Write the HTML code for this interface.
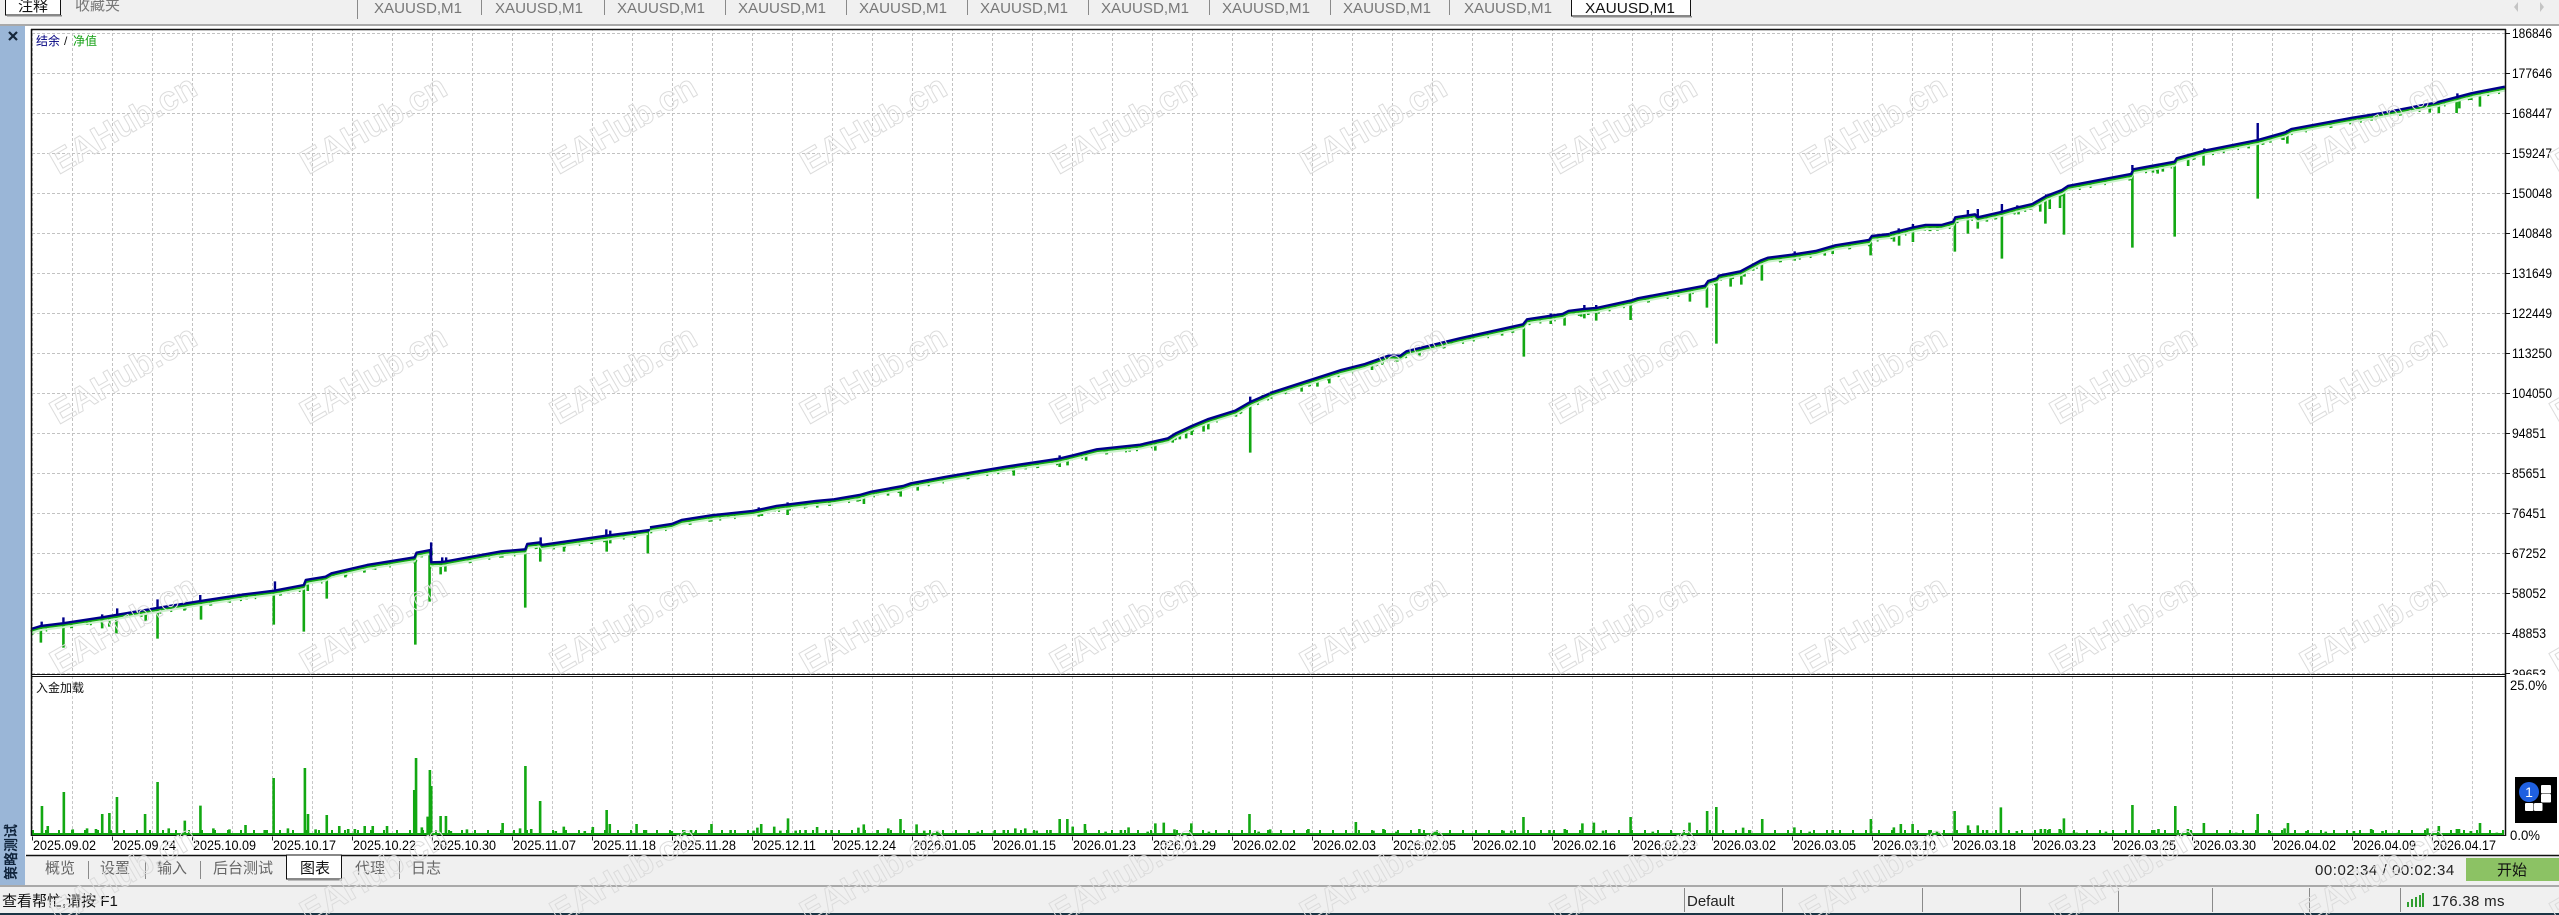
<!DOCTYPE html>
<html lang="zh-CN">
<head>
<meta charset="utf-8">
<title>XAUUSD,M1</title>
<style>
html,body{margin:0;padding:0;background:#fff;width:2559px;height:915px;overflow:hidden}
svg{display:block;position:absolute;left:0;top:0}
text{font-family:"Liberation Sans","Noto Sans CJK SC",sans-serif}
.tab{font-size:15px;fill:#777}
.y{font-size:14px;fill:#000}
.d{font-size:14px;fill:#000}
.b{font-size:15px;fill:#666}
.w{font-size:34px;font-weight:bold;fill:none;stroke:#dcdcdc;stroke-width:1;text-anchor:middle}
.sp{fill:none;stroke:#12a812;stroke-width:2.6}
.bl{fill:none;stroke:#00008b;stroke-width:2.4}
.cu{fill:none;stroke-linejoin:round}
.nz{fill:none;stroke:#12a812;stroke-width:5;stroke-dasharray:2 13 1.5 23 3 17 2 9}
path{vector-effect:non-scaling-stroke}
</style>
</head>
<body>
<svg width="2559" height="915" viewBox="0 0 2559 915" xmlns="http://www.w3.org/2000/svg">
<defs>
<pattern id="g1" x="72" y="33" width="40" height="40" patternUnits="userSpaceOnUse">
<path d="M.5 0V40M0 .5H40" stroke="#c2c2c2" stroke-width="1" stroke-dasharray="3 2" fill="none"/>
</pattern>
<pattern id="g2" x="72" y="676" width="40" height="40" patternUnits="userSpaceOnUse">
<path d="M.5 0V40" stroke="#c8c8c8" stroke-width="1" stroke-dasharray="3 2" fill="none"/>
</pattern>
</defs>

<rect width="2559" height="915" fill="#fff"/>
<!-- top bar -->
<rect x="0" y="0" width="2559" height="24" fill="#f0f0f0"/>
<rect x="0" y="24" width="2559" height="2" fill="#a9a9a9"/>
<rect x="5.5" y="-2" width="55" height="17" fill="#fff" stroke="#111"/>
<rect x="7" y="15" width="55" height="1.5" fill="#888"/>
<text x="18" y="11" font-size="15" fill="#111">注释</text>
<text x="75" y="10" font-size="15" fill="#777">收藏夹</text>
<path d="M357.5 0V19M481.5 0V15M604.5 0V15M725.5 0V15M846.5 0V15M967.5 0V15M1088.5 0V15M1209.5 0V15M1330.5 0V15M1449.5 0V15" stroke="#8a8a8a" fill="none"/>
<text class="tab" x="374" y="13" textLength="88" lengthAdjust="spacingAndGlyphs">XAUUSD,M1</text>
<text class="tab" x="495" y="13" textLength="88" lengthAdjust="spacingAndGlyphs">XAUUSD,M1</text>
<text class="tab" x="617" y="13" textLength="88" lengthAdjust="spacingAndGlyphs">XAUUSD,M1</text>
<text class="tab" x="738" y="13" textLength="88" lengthAdjust="spacingAndGlyphs">XAUUSD,M1</text>
<text class="tab" x="859" y="13" textLength="88" lengthAdjust="spacingAndGlyphs">XAUUSD,M1</text>
<text class="tab" x="980" y="13" textLength="88" lengthAdjust="spacingAndGlyphs">XAUUSD,M1</text>
<text class="tab" x="1101" y="13" textLength="88" lengthAdjust="spacingAndGlyphs">XAUUSD,M1</text>
<text class="tab" x="1222" y="13" textLength="88" lengthAdjust="spacingAndGlyphs">XAUUSD,M1</text>
<text class="tab" x="1343" y="13" textLength="88" lengthAdjust="spacingAndGlyphs">XAUUSD,M1</text>
<text class="tab" x="1464" y="13" textLength="88" lengthAdjust="spacingAndGlyphs">XAUUSD,M1</text>
<rect x="1571.5" y="-2" width="119" height="18" fill="#fff" stroke="#111"/>
<rect x="1573" y="16" width="119" height="1.5" fill="#888"/>
<text x="1585" y="13" font-size="15" fill="#111" textLength="90" lengthAdjust="spacingAndGlyphs">XAUUSD,M1</text>
<path d="M2518 2L2514 7L2518 12Z" fill="#c4c4c4"/>
<path d="M2540 2L2544 7L2540 12Z" fill="#c4c4c4"/>

<!-- left panel -->
<rect x="0" y="26" width="25" height="859" fill="#9ab6d7"/>
<path d="M9 32L17 40M17 32L9 40" stroke="#15263a" stroke-width="2.2" fill="none"/>
<text transform="translate(16,880) rotate(-90)" font-size="14" font-weight="bold" fill="#10243c">策略测试</text>

<!-- charts -->
<rect x="32" y="30" width="2473" height="644" fill="url(#g1)"/>
<rect x="32" y="677" width="2473" height="158" fill="url(#g2)"/>

<text x="36" y="45" font-size="12" fill="#000080">结余</text>
<text x="64" y="45" font-size="12" fill="#111">/</text>
<text x="73" y="45" font-size="12" fill="#12a012">净值</text>
<text x="36" y="692" font-size="12" fill="#111">入金加载</text>

<!-- section 1 -->
<g transform="translate(31,520) scale(.3954,.3333)">
<path class="sp" d="M25 318V368M82 310V383M142 305V315M180 295V325M198 292V320M216 288V340M290 275V303M320 265V356M388 250V272M430 243V299M500 232V247M545 222V238M614 212V314M650 208V218M690 195V335M700 185V213M748 170V236M765 160V172M795 155V172M843 138V158M865 133V148M900 128V138M972 110V374M988 100V112M1008 95V245M1036 125V163M1048 122V155M1105 112V122M1192 94V113M1250 88V263M1288 75V125M1348 70V95M1418 58V72M1456 50V95M1465 45V70M1530 35V50M1560 30V100"/>
<path class="nz" d="M0 338L25 329L80 321L180 303L215 296L320 275L430 254L540 234L615 223L690 206L695 191L745 181L760 171L850 146L970 123L975 109L1010 101L1012 138L1040 137L1190 105L1250 99L1255 83L1288 78L1292 86L1450 59L1560 41"/>
<path class="cu" stroke="#c9f2c9" stroke-width="2" d="M0 339L25 330L80 322L180 304L215 297L320 276L430 255L540 235L615 224L690 207L695 192L745 182L760 172L850 147L970 124L975 110L1010 102L1012 139L1040 138L1190 106L1250 100L1255 84L1288 79L1292 87L1450 60L1560 42"/>
<path class="cu" stroke="#12a812" stroke-width="2.4" d="M0 332L25 323L80 315L180 297L215 290L320 269L430 248L540 228L615 217L690 200L695 185L745 175L760 165L850 140L970 117L975 103L1010 95L1012 132L1040 131L1190 99L1250 93L1255 77L1288 72L1292 80L1450 53L1560 35"/>
<path class="bl" d="M27 305V320M82 292V310M180 283V295M218 265V285M320 238V264M428 225V243M617 184V212M1012 67V127M1040 112V125M1050 112V122M1289 52V75M1455 28V48M1465 32V45"/>
<path class="cu bl" d="M0 327L25 318L80 310L180 292L215 285L320 264L430 243L540 223L615 212L690 195L695 180L745 170L760 160L850 135L970 112L975 98L1010 90L1012 127L1040 126L1190 94L1250 88L1255 72L1288 67L1292 75L1450 48L1566 30"/>
</g>

<!-- section 2 -->
<g transform="translate(650,340) scale(.3954,.3333)">
<path class="sp" d="M155 526V545M198 518V533M275 510V530M283 510V528M315 500V515M348 495V525M395 490V503M423 484V503M525 465V485M541 463V492M575 455V467M602 450V467M634 440V470M677 428V452M738 412V422M830 397V405M873 388V398M890 385V393M920 380V407M950 375V388M978 370V380M1018 360V372M1036 355V381M1056 352V376M1103 340V362M1150 330V338M1213 320V335M1278 303V332M1295 298V308M1322 285V308M1340 280V298M1356 270V295M1370 258V285M1400 245V275M1412 238V268M1482 210V230M1518 186V338M1535 175V192M1550 165V180"/>
<path class="nz" d="M0 573L55 563L80 551L155 537L260 524L320 509L420 494L465 489L530 476L560 466L640 449L660 441L750 421L900 391L1030 368L1070 357L1130 339L1240 325L1310 306L1330 291L1370 269L1410 249L1480 223L1518 197L1568 171"/>
<path class="cu" stroke="#c9f2c9" stroke-width="2" d="M0 574L55 564L80 552L155 538L260 525L320 510L420 495L465 490L530 477L560 467L640 450L660 442L750 422L900 392L1030 369L1070 358L1130 340L1240 326L1310 307L1330 292L1370 270L1410 250L1480 224L1518 198L1568 172"/>
<path class="cu" stroke="#12a812" stroke-width="2.4" d="M0 567L55 557L80 545L155 531L260 518L320 503L420 488L465 483L530 470L560 460L640 443L660 435L750 415L900 385L1030 362L1070 351L1130 333L1240 319L1310 300L1330 285L1370 263L1410 243L1480 217L1518 191L1568 165"/>
<path class="bl" d="M348 487V497M275 502V512M1036 346V356M1518 170V186"/>
<path class="cu bl" d="M0 562L55 552L80 540L155 526L260 513L320 498L420 483L465 478L530 465L560 455L640 438L660 430L750 410L900 380L1030 357L1070 346L1130 328L1240 314L1310 295L1330 280L1370 258L1410 238L1480 212L1518 186L1568 160"/>
</g>

<!-- section 3 -->
<g transform="translate(1270,210) scale(.3954,.3333)">
<path class="sp" d="M40 535V550M80 525V545M120 510V530M150 495V520M228 465V480M258 460V480M285 445V465M322 437V455M378 415V437M412 405V415M430 400V413M460 395V402M505 382V392M587 360V377M642 343V440M710 320V342M745 312V347M768 305V315M787 300V320M795 298V325M805 298V315M825 295V332M873 280V292M912 271V330M950 263V270M1062 235V275M1105 227V293M1129 205V401M1140 198V212M1165 193V230M1192 184V224M1200 178V200M1222 160V182M1244 150V212M1290 142V155M1327 135V152M1365 128V140M1403 120V137M1423 110V132M1519 90V136"/>
<path class="nz" d="M0 560L180 491L240 473L300 448L330 448L345 435L480 396L640 354L650 339L740 323L755 314L795 308L825 305L915 282L930 276L1100 238L1108 224L1130 216L1135 208L1190 195L1240 163L1260 154L1320 145L1380 134L1430 117L1515 101L1522 89L1568 83"/>
<path class="cu" stroke="#c9f2c9" stroke-width="2" d="M0 561L180 492L240 474L300 449L330 449L345 436L480 397L640 355L650 340L740 324L755 315L795 309L825 306L915 283L930 277L1100 239L1108 225L1130 217L1135 209L1190 196L1240 164L1260 155L1320 146L1380 135L1430 118L1515 102L1522 90L1568 84"/>
<path class="cu" stroke="#12a812" stroke-width="2.4" d="M0 554L180 485L240 467L300 442L330 442L345 429L480 390L640 348L650 333L740 317L755 308L795 302L825 299L915 276L930 270L1100 232L1108 218L1130 210L1135 202L1190 189L1240 157L1260 148L1320 139L1380 128L1430 111L1515 95L1522 83L1568 77"/>
<path class="bl" d="M710 310V322M795 285V298M825 285V295M1327 124V135"/>
<path class="cu bl" d="M0 549L180 480L240 462L300 437L330 437L345 424L480 385L640 343L650 328L740 312L755 303L795 297L825 294L915 271L930 265L1100 227L1108 213L1130 205L1135 197L1190 184L1240 152L1260 143L1320 134L1380 123L1430 106L1515 90L1522 78L1568 72"/>
</g>

<!-- section 4 -->
<g transform="translate(1890,80) scale(.3954,.3333)">
<path class="sp" d="M10 460V485M23 455V497M42 450V460M58 442V486M88 437V452M120 435V452M164 425V515M197 410V461M222 412V446M245 408V425M268 400V415M283 395V536M310 388V402M325 382V403M355 372V390M380 365V395M393 350V431M404 348V387M430 335V384M440 330V464M507 308V320M545 296V307M613 282V503M665 260V278M677 258V281M690 256V275M720 245V470M754 235V258M770 228V236M793 215V257M870 198V207M907 188V205M930 180V356M962 168V188M995 160V180M1005 150V191M1050 140V155M1100 130V135M1170 113V122M1218 102V122M1365 72V98M1388 68V99M1433 55V99M1440 55V85M1470 40V60M1492 35V80"/>
<path class="nz" d="M0 471L60 453L90 446L130 446L160 436L165 423L215 414L222 423L285 406L320 394L360 383L395 359L435 341L450 329L610 293L615 279L720 256L725 246L795 223L930 191L1000 168L1015 158L1170 124L1240 111L1380 79L1470 51L1490 46L1555 31"/>
<path class="cu" stroke="#c9f2c9" stroke-width="2" d="M0 472L60 454L90 447L130 447L160 437L165 424L215 415L222 424L285 407L320 395L360 384L395 360L435 342L450 330L610 294L615 280L720 257L725 247L795 224L930 192L1000 169L1015 159L1170 125L1240 112L1380 80L1470 52L1490 47L1555 32"/>
<path class="cu" stroke="#12a812" stroke-width="2.4" d="M0 465L60 447L90 440L130 440L160 430L165 417L215 408L222 417L285 400L320 388L360 377L395 353L435 335L450 323L610 287L615 273L720 250L725 240L795 217L930 185L1000 162L1015 152L1170 118L1240 105L1380 73L1470 45L1490 40L1555 25"/>
<path class="bl" d="M22 445V458M58 432V442M197 390V408M222 387V412M283 372V395M322 376V384M395 343V350M613 255V270M795 205V212M930 129V180M1435 40V55"/>
<path class="cu bl" d="M0 460L60 442L90 435L130 435L160 425L165 412L215 403L222 412L285 395L320 383L360 372L395 348L435 330L450 318L610 282L615 268L720 245L725 235L795 212L930 180L1000 157L1015 147L1170 113L1240 100L1380 68L1470 40L1490 35L1555 20"/>
</g>

<!-- lower chart bars -->
<path d="M32 832H2504" stroke="#12a812" stroke-width="4" stroke-dasharray="2 11" fill="none"/>
<path d="M32 834H2504" stroke="#12a812" stroke-width="2" fill="none"/>
<g transform="translate(0,640) scale(.4464,.3333)">
<path class="sp" d="M94 585V498M107 585V558M143 585V456M163 585V568M195 585V565M215 585V567M229 585V522M245 585V519M262 585V471M325 585V522M353 585V426M378 585V565M414 585V542M449 585V497M478 585V565M514 585V568M550 585V555M593 585V570M613 585V414M645 585V565M683 585V384M690 585V522M707 585V568M732 585V525M760 585V558M780 585V567M795 585V567M817 585V558M835 585V558M867 585V558M928 585V450M932 585V354M945 585V562M958 585V530M963 585V390M966 585V438M987 585V528M999 585V528M1010 585V573M1046 585V568M1126 585V549M1165 585V565M1177 585V378M1190 585V567M1210 585V483M1245 585V573M1263 585V560M1310 585V573M1328 585V561M1359 585V510M1366 585V552M1426 585V552M1447 585V570M1505 585V573M1533 585V570M1548 585V570M1558 585V575"/>
</g>
<g transform="translate(700,760) scale(.7653,.3333)">
<path class="sp" d="M15 225V192M40 225V210M70 225V212M75 225V203M80 225V192M97 225V200M105 225V212M115 225V175M125 225V212M138 225V210M153 225V201M172 225V210M207 225V203M214 225V193M232 225V210M246 225V205M262 225V177M283 225V193M293 225V212M310 225V212M363 225V215M385 225V212M397 225V210M412 225V205M425 225V205M440 225V212M458 225V210M470 225V177M480 225V177M487 225V200M503 225V192M530 225V215M550 225V210M560 225V202M585 225V215M595 225V190M606 225V188M620 225V208M642 225V190M665 225V215M718 225V162M730 225V215M745 225V208M795 225V207M857 225V186M880 225V212M893 225V207M910 225V215M940 225V207M960 225V215M1050 225V212M1060 225V212M1076 225V171M1110 225V210M1130 225V207M1153 225V190M1168 225V188M1180 225V212M1216 225V171M1245 225V215M1293 225V188M1316 225V153M1328 225V141M1363 225V203M1372 225V210M1388 225V177M1430 225V202M1450 225V215M1480 225V210M1530 225V177M1560 225V202"/>
</g>
<g transform="translate(1900,640) scale(.4203,.3333)">
<path class="sp" d="M2 585V552M30 585V552M70 585V570M88 585V575M130 585V513M162 585V556M185 585V556M207 585V570M240 585V502M278 585V573M335 585V567M345 585V567M356 585V567M380 585V567M390 585V535M420 585V578M490 585V575M553 585V495M605 585V570M615 585V567M655 585V498M685 585V567M723 585V549M800 585V578M851 585V522M880 585V573M915 585V565M923 585V549M967 585V573M1013 585V575M1080 585V573M1121 585V567M1148 585V573M1185 585V578M1255 585V565M1282 585V558M1325 585V567M1330 585V567M1358 585V573M1380 585V549M1420 585V578"/>
</g>

<!-- right axis labels -->
<text class="y" x="2512" y="38" textLength="40" lengthAdjust="spacingAndGlyphs">186846</text>
<text class="y" x="2512" y="78" textLength="40" lengthAdjust="spacingAndGlyphs">177646</text>
<text class="y" x="2512" y="118" textLength="40" lengthAdjust="spacingAndGlyphs">168447</text>
<text class="y" x="2512" y="158" textLength="40" lengthAdjust="spacingAndGlyphs">159247</text>
<text class="y" x="2512" y="198" textLength="40" lengthAdjust="spacingAndGlyphs">150048</text>
<text class="y" x="2512" y="238" textLength="40" lengthAdjust="spacingAndGlyphs">140848</text>
<text class="y" x="2512" y="278" textLength="40" lengthAdjust="spacingAndGlyphs">131649</text>
<text class="y" x="2512" y="318" textLength="40" lengthAdjust="spacingAndGlyphs">122449</text>
<text class="y" x="2512" y="358" textLength="40" lengthAdjust="spacingAndGlyphs">113250</text>
<text class="y" x="2512" y="398" textLength="40" lengthAdjust="spacingAndGlyphs">104050</text>
<text class="y" x="2512" y="438" textLength="34" lengthAdjust="spacingAndGlyphs">94851</text>
<text class="y" x="2512" y="478" textLength="34" lengthAdjust="spacingAndGlyphs">85651</text>
<text class="y" x="2512" y="518" textLength="34" lengthAdjust="spacingAndGlyphs">76451</text>
<text class="y" x="2512" y="558" textLength="34" lengthAdjust="spacingAndGlyphs">67252</text>
<text class="y" x="2512" y="598" textLength="34" lengthAdjust="spacingAndGlyphs">58052</text>
<text class="y" x="2512" y="638" textLength="34" lengthAdjust="spacingAndGlyphs">48853</text>
<text class="y" x="2512" y="679" textLength="34" lengthAdjust="spacingAndGlyphs">39653</text>
<rect x="2506" y="675" width="53" height="10" fill="#fff"/>
<text class="y" x="2510" y="690" textLength="37" lengthAdjust="spacingAndGlyphs">25.0%</text>
<text class="y" x="2510" y="840" textLength="30" lengthAdjust="spacingAndGlyphs">0.0%</text>
<path d="M2507.5 33V674" stroke="#111" stroke-width="5" stroke-dasharray="1 39" fill="none"/>

<!-- chart frames -->
<path d="M31.5 29V836M2505.5 29V836" stroke="#111" stroke-width="1.5" fill="none"/>
<path d="M31 29.5H2506" stroke="#111" stroke-width="1.5" fill="none"/>
<path d="M31 674.5H2506M31 676.5H2506" stroke="#111" stroke-width="1" fill="none"/>
<path d="M31 835.5H2506" stroke="#111" stroke-width="1" fill="none"/>
<path d="M32 838.5H2505" stroke="#222" stroke-width="4" stroke-dasharray="1 79" fill="none"/>

<!-- date labels -->
<text class="d" x="33" y="850" textLength="63" lengthAdjust="spacingAndGlyphs">2025.09.02</text>
<text class="d" x="113" y="850" textLength="63" lengthAdjust="spacingAndGlyphs">2025.09.24</text>
<text class="d" x="193" y="850" textLength="63" lengthAdjust="spacingAndGlyphs">2025.10.09</text>
<text class="d" x="273" y="850" textLength="63" lengthAdjust="spacingAndGlyphs">2025.10.17</text>
<text class="d" x="353" y="850" textLength="63" lengthAdjust="spacingAndGlyphs">2025.10.22</text>
<text class="d" x="433" y="850" textLength="63" lengthAdjust="spacingAndGlyphs">2025.10.30</text>
<text class="d" x="513" y="850" textLength="63" lengthAdjust="spacingAndGlyphs">2025.11.07</text>
<text class="d" x="593" y="850" textLength="63" lengthAdjust="spacingAndGlyphs">2025.11.18</text>
<text class="d" x="673" y="850" textLength="63" lengthAdjust="spacingAndGlyphs">2025.11.28</text>
<text class="d" x="753" y="850" textLength="63" lengthAdjust="spacingAndGlyphs">2025.12.11</text>
<text class="d" x="833" y="850" textLength="63" lengthAdjust="spacingAndGlyphs">2025.12.24</text>
<text class="d" x="913" y="850" textLength="63" lengthAdjust="spacingAndGlyphs">2026.01.05</text>
<text class="d" x="993" y="850" textLength="63" lengthAdjust="spacingAndGlyphs">2026.01.15</text>
<text class="d" x="1073" y="850" textLength="63" lengthAdjust="spacingAndGlyphs">2026.01.23</text>
<text class="d" x="1153" y="850" textLength="63" lengthAdjust="spacingAndGlyphs">2026.01.29</text>
<text class="d" x="1233" y="850" textLength="63" lengthAdjust="spacingAndGlyphs">2026.02.02</text>
<text class="d" x="1313" y="850" textLength="63" lengthAdjust="spacingAndGlyphs">2026.02.03</text>
<text class="d" x="1393" y="850" textLength="63" lengthAdjust="spacingAndGlyphs">2026.02.05</text>
<text class="d" x="1473" y="850" textLength="63" lengthAdjust="spacingAndGlyphs">2026.02.10</text>
<text class="d" x="1553" y="850" textLength="63" lengthAdjust="spacingAndGlyphs">2026.02.16</text>
<text class="d" x="1633" y="850" textLength="63" lengthAdjust="spacingAndGlyphs">2026.02.23</text>
<text class="d" x="1713" y="850" textLength="63" lengthAdjust="spacingAndGlyphs">2026.03.02</text>
<text class="d" x="1793" y="850" textLength="63" lengthAdjust="spacingAndGlyphs">2026.03.05</text>
<text class="d" x="1873" y="850" textLength="63" lengthAdjust="spacingAndGlyphs">2026.03.10</text>
<text class="d" x="1953" y="850" textLength="63" lengthAdjust="spacingAndGlyphs">2026.03.18</text>
<text class="d" x="2033" y="850" textLength="63" lengthAdjust="spacingAndGlyphs">2026.03.23</text>
<text class="d" x="2113" y="850" textLength="63" lengthAdjust="spacingAndGlyphs">2026.03.25</text>
<text class="d" x="2193" y="850" textLength="63" lengthAdjust="spacingAndGlyphs">2026.03.30</text>
<text class="d" x="2273" y="850" textLength="63" lengthAdjust="spacingAndGlyphs">2026.04.02</text>
<text class="d" x="2353" y="850" textLength="63" lengthAdjust="spacingAndGlyphs">2026.04.09</text>
<text class="d" x="2433" y="850" textLength="63" lengthAdjust="spacingAndGlyphs">2026.04.17</text>

<!-- black widget -->
<rect x="2515" y="777" width="42" height="46" fill="#000"/>
<rect x="2541" y="785" width="10" height="8.5" rx="1" fill="#fff"/>
<rect x="2541" y="794" width="10" height="8.5" rx="1" fill="#fff"/>
<rect x="2525" y="803" width="8.5" height="8" rx="1" fill="#fff"/>
<rect x="2534" y="803" width="8.5" height="8" rx="1" fill="#fff"/>
<circle cx="2529" cy="792" r="10" fill="#1f60e0"/>
<text x="2529" y="797" font-size="14" fill="#fff" text-anchor="middle">1</text>

<!-- tab bar -->
<rect x="25" y="856" width="2534" height="29" fill="#f0f0f0"/>
<rect x="0" y="885" width="2559" height="2" fill="#a9a9a9"/>
<path d="M26 855.5H2559" stroke="#111" stroke-width="1.5" fill="none"/>
<path d="M88.5 861V879M145.5 861V879M200.5 861V879M399.5 861V879" stroke="#8a8a8a" fill="none"/>
<rect x="286.5" y="855" width="55" height="24" fill="#fff" stroke="#111"/>
<rect x="288" y="879" width="54" height="1.5" fill="#888"/>
<text class="b" x="45" y="873">概览</text>
<text class="b" x="100" y="873">设置</text>
<text class="b" x="157" y="873">输入</text>
<text class="b" x="213" y="873">后台测试</text>
<text x="300" y="873" font-size="15" fill="#111">图表</text>
<text class="b" x="355" y="873">代理</text>
<text class="b" x="411" y="873">日志</text>
<text x="2315" y="875" font-size="15" fill="#222" letter-spacing=".55">00:02:34 / 00:02:34</text>
<rect x="2466" y="858" width="93" height="23" fill="#8cc264"/>
<text x="2512" y="875" font-size="15" fill="#111" text-anchor="middle">开始</text>

<!-- status bar -->
<rect x="0" y="887" width="2559" height="26" fill="#f0f0f0"/>
<rect x="0" y="913" width="2559" height="2" fill="#1b3545"/>
<text x="2" y="906" font-size="15" fill="#111">查看帮忙,请按 F1</text>
<path d="M1684.5 888V912M1782.5 888V912M1922.5 888V912M2020.5 888V912M2118.5 888V912M2212.5 888V912M2309.5 888V912M2400.5 888V912" stroke="#8a8a8a" fill="none"/>
<text x="1687" y="906" font-size="15" fill="#222">Default</text>
<path d="M2407 902h2v5h-2zM2411 899h2v8h-2zM2415 897h2v10h-2zM2419 895h2v12h-2zM2422 893h2v14h-2z" fill="#2f9e2f"/>
<text x="2432" y="906" font-size="15" fill="#222" letter-spacing=".3">176.38 ms</text>

<!-- watermark -->
<g transform="translate(123,124) rotate(-30)"><text class="w" y="12">EAHub.cn</text></g>
<g transform="translate(373,124) rotate(-30)"><text class="w" y="12">EAHub.cn</text></g>
<g transform="translate(623,124) rotate(-30)"><text class="w" y="12">EAHub.cn</text></g>
<g transform="translate(873,124) rotate(-30)"><text class="w" y="12">EAHub.cn</text></g>
<g transform="translate(1123,124) rotate(-30)"><text class="w" y="12">EAHub.cn</text></g>
<g transform="translate(1373,124) rotate(-30)"><text class="w" y="12">EAHub.cn</text></g>
<g transform="translate(1623,124) rotate(-30)"><text class="w" y="12">EAHub.cn</text></g>
<g transform="translate(1873,124) rotate(-30)"><text class="w" y="12">EAHub.cn</text></g>
<g transform="translate(2123,124) rotate(-30)"><text class="w" y="12">EAHub.cn</text></g>
<g transform="translate(2373,124) rotate(-30)"><text class="w" y="12">EAHub.cn</text></g>
<g transform="translate(2623,124) rotate(-30)"><text class="w" y="12">EAHub.cn</text></g>
<g transform="translate(123,374) rotate(-30)"><text class="w" y="12">EAHub.cn</text></g>
<g transform="translate(373,374) rotate(-30)"><text class="w" y="12">EAHub.cn</text></g>
<g transform="translate(623,374) rotate(-30)"><text class="w" y="12">EAHub.cn</text></g>
<g transform="translate(873,374) rotate(-30)"><text class="w" y="12">EAHub.cn</text></g>
<g transform="translate(1123,374) rotate(-30)"><text class="w" y="12">EAHub.cn</text></g>
<g transform="translate(1373,374) rotate(-30)"><text class="w" y="12">EAHub.cn</text></g>
<g transform="translate(1623,374) rotate(-30)"><text class="w" y="12">EAHub.cn</text></g>
<g transform="translate(1873,374) rotate(-30)"><text class="w" y="12">EAHub.cn</text></g>
<g transform="translate(2123,374) rotate(-30)"><text class="w" y="12">EAHub.cn</text></g>
<g transform="translate(2373,374) rotate(-30)"><text class="w" y="12">EAHub.cn</text></g>
<g transform="translate(2623,374) rotate(-30)"><text class="w" y="12">EAHub.cn</text></g>
<g transform="translate(123,624) rotate(-30)"><text class="w" y="12">EAHub.cn</text></g>
<g transform="translate(373,624) rotate(-30)"><text class="w" y="12">EAHub.cn</text></g>
<g transform="translate(623,624) rotate(-30)"><text class="w" y="12">EAHub.cn</text></g>
<g transform="translate(873,624) rotate(-30)"><text class="w" y="12">EAHub.cn</text></g>
<g transform="translate(1123,624) rotate(-30)"><text class="w" y="12">EAHub.cn</text></g>
<g transform="translate(1373,624) rotate(-30)"><text class="w" y="12">EAHub.cn</text></g>
<g transform="translate(1623,624) rotate(-30)"><text class="w" y="12">EAHub.cn</text></g>
<g transform="translate(1873,624) rotate(-30)"><text class="w" y="12">EAHub.cn</text></g>
<g transform="translate(2123,624) rotate(-30)"><text class="w" y="12">EAHub.cn</text></g>
<g transform="translate(2373,624) rotate(-30)"><text class="w" y="12">EAHub.cn</text></g>
<g transform="translate(2623,624) rotate(-30)"><text class="w" y="12">EAHub.cn</text></g>
<g transform="translate(123,874) rotate(-30)"><text class="w" y="12">EAHub.cn</text></g>
<g transform="translate(373,874) rotate(-30)"><text class="w" y="12">EAHub.cn</text></g>
<g transform="translate(623,874) rotate(-30)"><text class="w" y="12">EAHub.cn</text></g>
<g transform="translate(873,874) rotate(-30)"><text class="w" y="12">EAHub.cn</text></g>
<g transform="translate(1123,874) rotate(-30)"><text class="w" y="12">EAHub.cn</text></g>
<g transform="translate(1373,874) rotate(-30)"><text class="w" y="12">EAHub.cn</text></g>
<g transform="translate(1623,874) rotate(-30)"><text class="w" y="12">EAHub.cn</text></g>
<g transform="translate(1873,874) rotate(-30)"><text class="w" y="12">EAHub.cn</text></g>
<g transform="translate(2123,874) rotate(-30)"><text class="w" y="12">EAHub.cn</text></g>
<g transform="translate(2373,874) rotate(-30)"><text class="w" y="12">EAHub.cn</text></g>
<g transform="translate(2623,874) rotate(-30)"><text class="w" y="12">EAHub.cn</text></g>
</svg>
</body>
</html>
